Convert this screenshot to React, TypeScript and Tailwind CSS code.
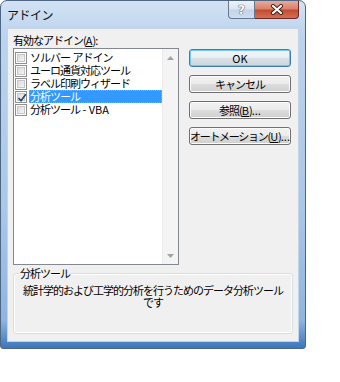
import React from 'react';

const items: { label: React.ReactNode; checked: boolean }[] = [
  { label: <>ソルバー<span className="tracking-normal"> </span>アドイン</>, checked: false },
  { label: 'ユーロ通貨対応ツール', checked: false },
  { label: 'ラベル印刷ウィザード', checked: false },
  { label: '分析ツール', checked: true },
  { label: <>分析ツール<span className="tracking-normal"> - VBA</span></>, checked: false },
];

const Checkbox: React.FC<{ checked: boolean }> = ({ checked }) => (
  <div className="w-[12px] h-[12px] shrink-0 border border-[#8e8f8f] bg-white p-[1px]">
    <div className="relative w-full h-full border border-[#c6c6c6] bg-[linear-gradient(135deg,#dcdcdc_0%,#f4f4f4_100%)]">
      {checked && (
        <svg className="absolute -left-[1px] -top-[1px]" width="10" height="10" viewBox="0 0 10 10">
          <path d="M1.5 5 L4 7.8 L8.8 1.2" fill="none" stroke="#21426f" strokeWidth="1.6" />
        </svg>
      )}
    </div>
  </div>
);

const Button: React.FC<{ children: React.ReactNode; isDefault?: boolean }> = ({ children, isDefault }) => (
  <div
    className={
      isDefault
        ? 'h-[18px] w-[102px] flex items-center justify-center rounded-[3px] border border-[#3c7fb1] shadow-[inset_0_0_0_1px_#6fc8f5] bg-[linear-gradient(to_bottom,#f3f7fa_0%,#e9eef2_50%,#d9e1e6_50%,#ccd6dc_100%)]'
        : 'h-[18px] w-[102px] flex items-center justify-center rounded-[3px] border border-[#707070] shadow-[inset_0_0_0_1px_#fcfcfc] bg-[linear-gradient(to_bottom,#f2f2f2_0%,#ebebeb_50%,#dddddd_50%,#cfcfcf_100%)]'
    }
  >
    <span className="leading-[14px] whitespace-nowrap">{children}</span>
  </div>
);

export default function App() {
  return (
    <div className="w-[340px] h-[382px] bg-white text-[11px] tracking-[-1px] text-black font-['Noto_Sans_CJK_JP',sans-serif]">
      <div className="w-[306px] h-[349px] flex flex-col rounded-t-[7px] rounded-b-[3px] border border-[#4e6684] bg-[linear-gradient(to_bottom,#d2e2f4_0%,#bcd4ee_10%,#a9c7e8_60%,#8fb5e0_92%,#3d76bb_100%)]">
        {/* title bar */}
        <div className="h-[27px] flex items-start">
          <div className="pl-[6px] pt-[6px] leading-[15px] text-[12px] tracking-[-0.5px] text-[#111]">アドイン</div>
          <div className="ml-auto mr-[6px] flex">
            <div className="w-[27px] h-[18px] flex items-center justify-center rounded-bl-[4px] border border-t-0 border-[#66788f] bg-[linear-gradient(to_bottom,#eef3f9_0%,#dbe5f1_45%,#c3d4e8_55%,#cfdff0_100%)]">
              <span className="font-['DejaVu_Sans',sans-serif] font-bold text-[12px] leading-[12px] tracking-normal text-white [text-shadow:0_0_1px_#2b3440,0_0_1px_#2b3440]">?</span>
            </div>
            <div className="w-[44px] h-[18px] flex items-center justify-center rounded-br-[4px] border border-t-0 border-l-0 border-[#6b2a1e] bg-[linear-gradient(to_bottom,#e9a99a_0%,#d9826d_45%,#c34b2f_55%,#d3705a_100%)]">
              <svg width="14" height="11" viewBox="0 0 14 11">
                <path d="M3 2 L11 9 M11 2 L3 9" stroke="#3a1c16" strokeWidth="4" strokeLinecap="round" />
                <path d="M3 2 L11 9 M11 2 L3 9" stroke="#ffffff" strokeWidth="2.2" strokeLinecap="round" />
              </svg>
            </div>
          </div>
        </div>

        {/* client area */}
        <div className="mx-[6px] mb-[6px] flex-1 flex flex-col border border-[#c5d3e2] bg-[#f0f0f0] pl-[5px] pt-[4px]">
          <div className="flex gap-[10px]">
            <div className="w-[166px] flex flex-col">
              <div className="h-[14px] leading-[14px]">
                有効なアドイン(<span className="underline tracking-normal">A</span>):
              </div>
              <div className="mt-[1px] h-[217px] flex border border-[#828790] bg-white">
                <div className="flex-1 pt-[2px]">
                  {items.map((it, i) => (
                    <div key={i} className="h-[13px] flex items-center pl-[1px]">
                      <Checkbox checked={it.checked} />
                      <div
                        className={
                          it.checked
                            ? 'ml-[2px] flex-1 h-full pl-[1px] leading-[13px] whitespace-pre bg-[#3399ff] text-white outline outline-1 outline-dotted outline-[#d9a15c] -outline-offset-1'
                            : 'ml-[2px] flex-1 h-full pl-[1px] leading-[13px] whitespace-pre'
                        }
                      >
                        <span>{it.label}</span>
                      </div>
                    </div>
                  ))}
                </div>
                <div className="w-[16px] flex flex-col justify-between bg-[#f4f4f4] border-l border-[#ececec]">
                  <div className="h-[17px] flex items-center justify-center">
                    <svg width="7" height="4" viewBox="0 0 7 4">
                      <path d="M3.5 0 L7 4 L0 4 Z" fill="#a3a3a3" />
                    </svg>
                  </div>
                  <div className="h-[17px] flex items-center justify-center">
                    <svg width="7" height="4" viewBox="0 0 7 4">
                      <path d="M0 0 L7 0 L3.5 4 Z" fill="#a3a3a3" />
                    </svg>
                  </div>
                </div>
              </div>
            </div>
            <div className="mt-[16px] flex flex-col gap-[8px]">
              <Button isDefault>
                <span className="tracking-normal">OK</span>
              </Button>
              <Button>キャンセル</Button>
              <Button>
                参照(<span className="underline tracking-normal">B</span>)<span className="tracking-normal">...</span>
              </Button>
              <Button>
                <span className="tracking-[-1.3px]">オートメーション</span>(<span className="underline tracking-normal">U</span>)<span className="tracking-normal">...</span>
              </Button>
            </div>
          </div>

          <fieldset className="mt-[1px] w-[280px] min-w-0 h-[68px] rounded-[3px] border border-[#d5dfe5] shadow-[inset_0_0_0_1px_#ffffff]">
            <legend className="ml-[5px] px-[1px] leading-[14px]">分析ツール</legend>
            <div className="pt-[4px] flex flex-col items-center leading-[12px] whitespace-nowrap">
              <span>統計学的および工学的分析を行うためのデータ分析ツール</span>
              <span>です</span>
            </div>
          </fieldset>
        </div>
      </div>
    </div>
  );
}
